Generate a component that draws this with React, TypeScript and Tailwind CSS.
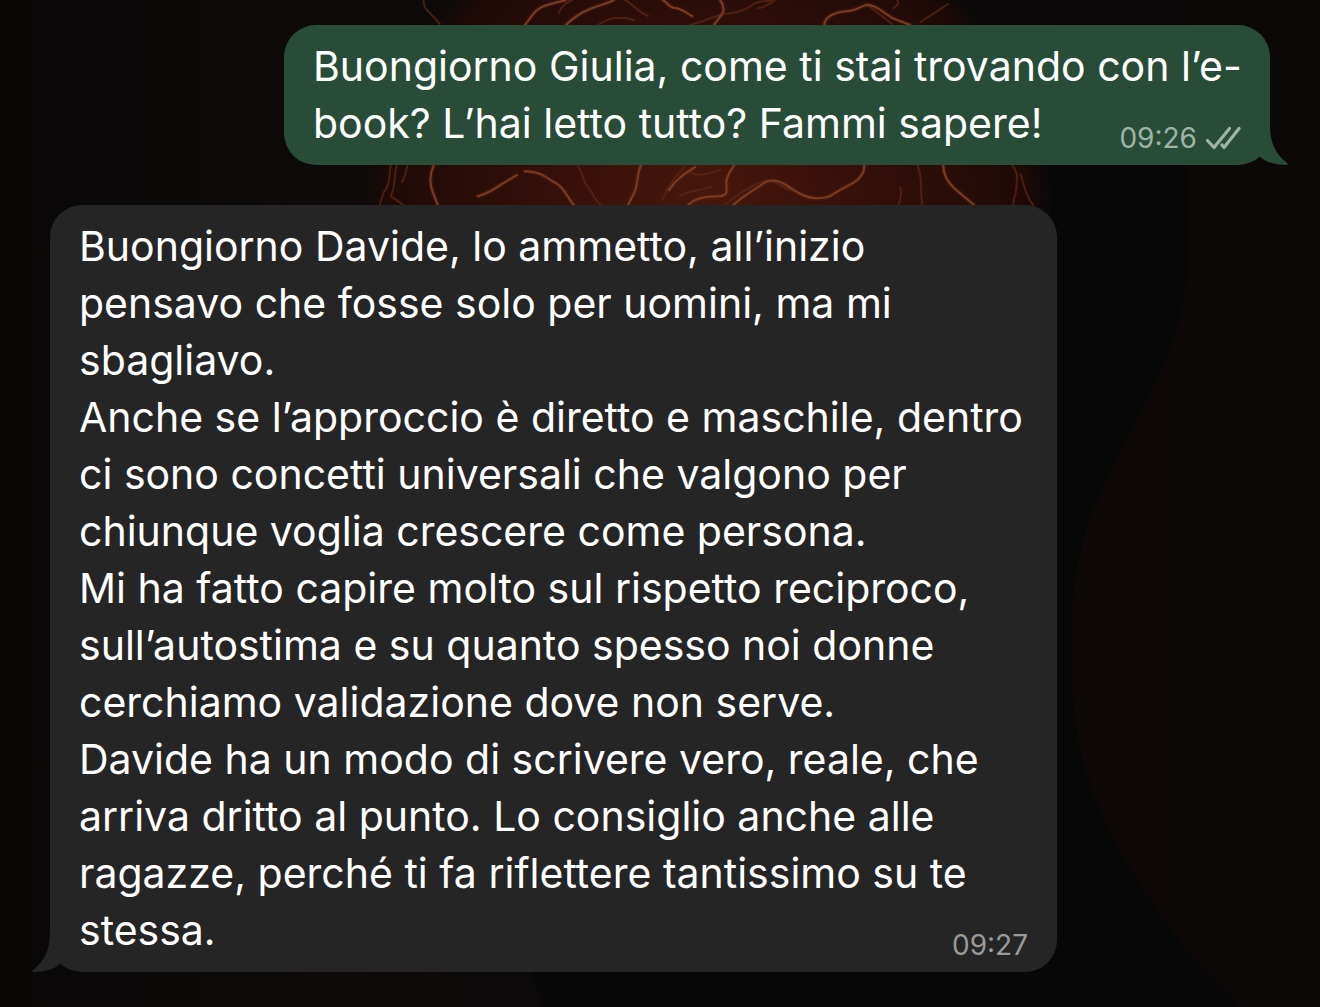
import { clsx } from 'clsx';

type Message = {
  id: number;
  text: string;
  time: string;
  sent: boolean;
};

const messages: Message[] = [
  {
    id: 1,
    sent: true,
    time: '09:26',
    text: 'Buongiorno Giulia, come ti stai trovando con l’e-book? L’hai letto tutto? Fammi sapere!',
  },
  {
    id: 2,
    sent: false,
    time: '09:27',
    text: [
      'Buongiorno Davide, lo ammetto, all’inizio pensavo che fosse solo per uomini, ma mi sbagliavo.',
      'Anche se l’approccio è diretto e maschile, dentro ci sono concetti universali che valgono per chiunque voglia crescere come persona.',
      'Mi ha fatto capire molto sul rispetto reciproco, sull’autostima e su quanto spesso noi donne cerchiamo validazione dove non serve.',
      'Davide ha un modo di scrivere vero, reale, che arriva dritto al punto. Lo consiglio anche alle ragazze, perché ti fa riflettere tantissimo su te stessa.',
    ].join('\n'),
  },
];

// bright filaments of the glowing sphere
const veins = [
  'M525 25C531 18 533 12 540 8S556 3 566 0',
  'M566 25C574 17 580 13 590 9S606 4 614 0',
  'M663 0C668 3 669 8 675 8S686 13 692 16',
  'M720 0C726 8 723 14 719 18L714 25',
  'M824 25C825 16 836 12 848 11S860 5 868 5S882 12 892 18L910 25',
  'M434 165C430 174 429 182 433 192L438 205',
  'M478 196C492 193 500 184 517 175',
  'M525 171C542 171 548 179 556 183S568 198 574 205',
  'M641 165C637 174 638 182 635 191L628 205',
  'M733 205C742 196 754 190 762 184S778 180 786 185S804 198 816 198S830 196 838 191S855 183 859 178S864 171 864 165',
  'M688 205C694 198 704 196 718 196S724 186 727 178S731 170 734 165',
  'M943 165C943 174 946 180 954 188L974 205',
  'M695 167C684 174 676 179 669 190',
];

const faintVeins = [
  'M424 0C423 8 429 12 433 16L440 24',
  'M559 13C561 6 566 3 572 0',
  'M598 25C610 17 620 16 634 20',
  'M625 0C634 5 638 12 648 16',
  'M724 14C738 13 746 10 752 5S768 2 776 0',
  'M758 8C764 8 768 4 773 2',
  'M690 25C702 22 710 18 720 15',
  'M866 4C874 10 882 17 892 24',
  'M897 0C899 4 897 6 893 8',
  'M920 22C930 16 938 10 948 4',
  'M391 165C389 176 391 184 384 192L380 205',
  'M397 165C394 176 396 186 391 196L404 205',
  'M408 165C406 170 406 176 402 182',
  'M578 166C584 174 582 180 588 187S594 199 601 205',
  'M685 166C676 176 669 184 662 200',
  'M690 172C700 178 712 172 720 170',
  'M680 196C692 188 700 192 712 186',
  'M724 205C738 194 752 184 764 181S780 188 790 190',
  'M917 165C923 176 919 188 922 205',
  'M900 187C902 194 900 200 898 205',
  'M1012 165C1019 174 1016 180 1016 188S1012 198 1013 205',
  'M1020 174C1024 184 1024 194 1033 205',
];

function Wallpaper() {
  return (
    <svg
      className="absolute inset-0 h-full w-full"
      viewBox="0 0 1320 1007"
      preserveAspectRatio="xMidYMid slice"
      aria-hidden="true"
    >
      <defs>
        <radialGradient id="ember">
          <stop offset="0" stopColor="#47170c" />
          <stop offset="0.4" stopColor="#38100a" />
          <stop offset="0.75" stopColor="#270c08" />
          <stop offset="0.92" stopColor="#1e0a07" />
          <stop offset="1" stopColor="#1a0907" stopOpacity="0" />
        </radialGradient>
        <linearGradient id="shade" x1="0" x2="1" y1="0" y2="0">
          <stop offset="0" stopColor="#090807" />
          <stop offset="0.25" stopColor="#0e0a0a" />
          <stop offset="1" stopColor="#090708" />
        </linearGradient>
        <linearGradient id="side" x1="0" x2="1" y1="0" y2="0">
          <stop offset="0" stopColor="#0e0806" />
          <stop offset="1" stopColor="#0b0807" />
        </linearGradient>
      </defs>
      <rect width="1320" height="1007" fill="url(#shade)" />
      <path
        d="M1188 0V245C1188 330 1153 385 1120 450S1070 560 1070 650S1090 810 1140 885S1200 965 1240 1007H1320V0Z"
        fill="url(#side)"
      />
      <path
        d="M1188 165V245C1188 330 1153 385 1120 450S1070 560 1070 650S1090 810 1140 885S1200 965 1240 1007H545L500 900H1050V165Z"
        fill="#070707"
      />
      <ellipse cx="706" cy="200" rx="345" ry="300" fill="url(#ember)" />
      <g fill="none" strokeLinecap="round" strokeLinejoin="round">
        <g stroke="#5c2212" strokeWidth="5" opacity="0.35">
          {veins.map((d) => (
            <path key={d} d={d} />
          ))}
        </g>
        <g stroke="#5c2616" strokeWidth="2" opacity="0.75">
          {faintVeins.map((d) => (
            <path key={d} d={d} />
          ))}
        </g>
        <g stroke="#7a3d24" strokeWidth="2">
          {veins.map((d) => (
            <path key={d} d={d} />
          ))}
        </g>
      </g>
    </svg>
  );
}

function Tail({ sent }: { sent: boolean }) {
  return (
    <svg
      className={clsx(
        'absolute bottom-0 h-10 w-8',
        sent ? '-right-[18px] text-[#284c38]' : '-left-[18px] -scale-x-100 text-[#252525]',
      )}
      viewBox="0 0 32 40"
      fill="currentColor"
      aria-hidden="true"
    >
      <path d="M14 0C14 19 20 29 31.500 38.500Q32.500 40 30 40C19 40 9 37 3 31L0 16Z" />
    </svg>
  );
}

function DoubleCheck() {
  return (
    <svg
      className="h-6 w-9"
      viewBox="0 0 36 24"
      fill="none"
      stroke="currentColor"
      strokeWidth="3.200"
      strokeLinecap="round"
      strokeLinejoin="round"
      role="img"
      aria-label="Consegnato"
    >
      <path d="M2.500 14.500L9 21.500L24.500 2.500" />
      <path d="M17 19L19 21.500L34 2.500" />
    </svg>
  );
}

function Bubble({ message }: { message: Message }) {
  const { text, time, sent } = message;

  return (
    <li
      className={clsx(
        'relative w-full rounded-[32px] py-[13px] pr-6 pl-[29px] text-white',
        sent ? 'max-w-[986px] self-end bg-[#284c38]' : 'max-w-[1007px] self-start bg-[#252525]',
      )}
    >
      <Tail sent={sent} />
      <div className="relative text-[41px] leading-[57px] whitespace-pre-line">
        {text}
        {/* floats onto the last line when there is room for it */}
        <span
          className={clsx(
            'float-right mt-[29px] mr-[5px] flex items-center gap-2 text-[28px] leading-7',
            sent ? 'text-[#9fb3a6]' : 'text-[#9a9a9a]',
          )}
        >
          <time>{time}</time>
          {sent && <DoubleCheck />}
        </span>
      </div>
    </li>
  );
}

export default function App() {
  return (
    <main className="relative min-h-screen overflow-hidden bg-[#090807] font-[Inter,'Liberation_Sans',sans-serif]">
      <Wallpaper />
      <ul className="relative flex flex-col gap-10 px-[50px] pt-[25px] pb-9">
        {messages.map((message) => (
          <Bubble key={message.id} message={message} />
        ))}
      </ul>
    </main>
  );
}
